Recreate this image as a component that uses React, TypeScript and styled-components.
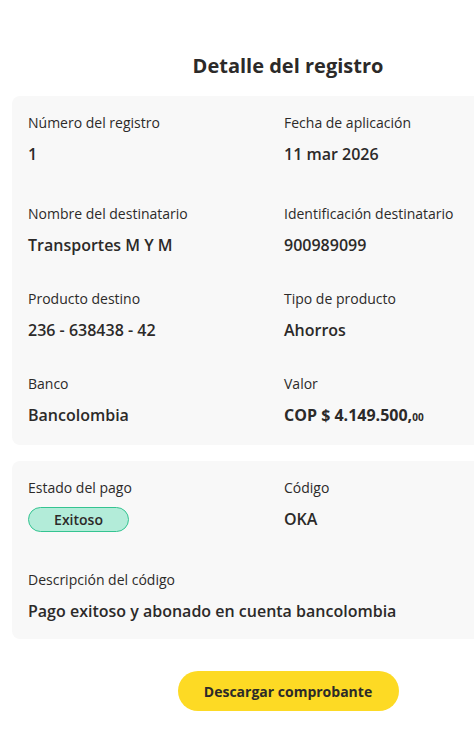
import React from 'react'
import styled, { createGlobalStyle } from 'styled-components'

const GlobalStyle = createGlobalStyle`
    body {
        margin: 0;
        background: #ffffff;
        font-family: "Open Sans", "Noto Sans", sans-serif;
        color: #2c2a29;
    }
`

const Cents = styled.span`
    font-size: 10px;
`

type Field = {
    label: string
    value: React.ReactNode
    bold?: boolean
}

const detailFields: Field[] = [
    { label: 'Número del registro', value: '1' },
    { label: 'Fecha de aplicación', value: '11 mar 2026' },
    { label: 'Nombre del destinatario', value: 'Transportes M Y M' },
    { label: 'Identificación destinatario', value: '900989099' },
    { label: 'Producto destino', value: '236 - 638438 - 42' },
    { label: 'Tipo de producto', value: 'Ahorros' },
    { label: 'Banco', value: 'Bancolombia' },
    {
        label: 'Valor',
        value: <>COP $ 4.149.500,<Cents>00</Cents></>,
        bold: true,
    },
]

export const App = () => {
    return (
        <Page>
            <GlobalStyle />
            <Title>Detalle del registro</Title>

            <Card $bottom={16}>
                <Grid $rowGap={32} $firstRowExtra={6}>
                    {detailFields.map((f) => (
                        <Item key={f.label}>
                            <Label>{f.label}</Label>
                            <Value $bold={f.bold}>{f.value}</Value>
                        </Item>
                    ))}
                </Grid>
            </Card>

            <Card $bottom={16}>
                <Grid $rowGap={38}>
                    <Item>
                        <Label>Estado del pago</Label>
                        <Badge>Exitoso</Badge>
                    </Item>
                    <Item>
                        <Label>Código</Label>
                        <Value>OKA</Value>
                    </Item>
                    <Item $wide>
                        <Label>Descripción del código</Label>
                        <Value>Pago exitoso y abonado en cuenta bancolombia</Value>
                    </Item>
                </Grid>
            </Card>

            <Actions>
                <PrimaryButton type="button">Descargar comprobante</PrimaryButton>
            </Actions>
        </Page>
    )
}

const Page = styled.div`
    width: 552px;
    padding: 52px 12px 34px;
    display: flex;
    flex-direction: column;
    gap: 16px;
`

const Title = styled.h1`
    margin: 0;
    text-align: center;
    font-size: 20px;
    line-height: 28px;
    font-weight: 700;
    color: #2c2a29;
`

const Card = styled.section<{ $bottom: number }>`
    background: #f8f8f8;
    border-radius: 8px;
    padding: 17px 16px ${(p) => p.$bottom}px;
`

const Grid = styled.div<{ $rowGap: number; $firstRowExtra?: number }>`
    display: grid;
    grid-template-columns: 256px 256px;
    row-gap: ${(p) => p.$rowGap}px;

    & > :nth-child(-n + 2) {
        margin-bottom: ${(p) => p.$firstRowExtra ?? 0}px;
    }
`

const Item = styled.div<{ $wide?: boolean }>`
    display: flex;
    flex-direction: column;
    align-items: flex-start;
    gap: 9px;
    grid-column: ${(p) => (p.$wide ? '1 / -1' : 'auto')};
`

const Label = styled.span`
    font-size: 14px;
    line-height: 20px;
    color: #2c2a29;
`

const Value = styled.span<{ $bold?: boolean }>`
    font-size: 16px;
    line-height: 24px;
    font-weight: ${(p) => (p.$bold ? 700 : 600)};
    color: #2c2a29;
`

const Badge = styled.span`
    box-sizing: border-box;
    width: 101px;
    height: 25px;
    display: flex;
    align-items: center;
    justify-content: center;
    background: #b3ecd9;
    border: 1px solid #34c491;
    border-radius: 13px;
    font-size: 14px;
    font-weight: 600;
    color: #2c2a29;
`

const Actions = styled.div`
    display: flex;
    justify-content: center;
    padding-top: 16px;
`

const PrimaryButton = styled.button`
    width: 221px;
    height: 40px;
    border: none;
    border-radius: 20px;
    background: #fdda24;
    font-family: "Open Sans", "Noto Sans", sans-serif;
    font-size: 14px;
    font-weight: 700;
    color: #2c2a29;
    cursor: pointer;
`

export default App
